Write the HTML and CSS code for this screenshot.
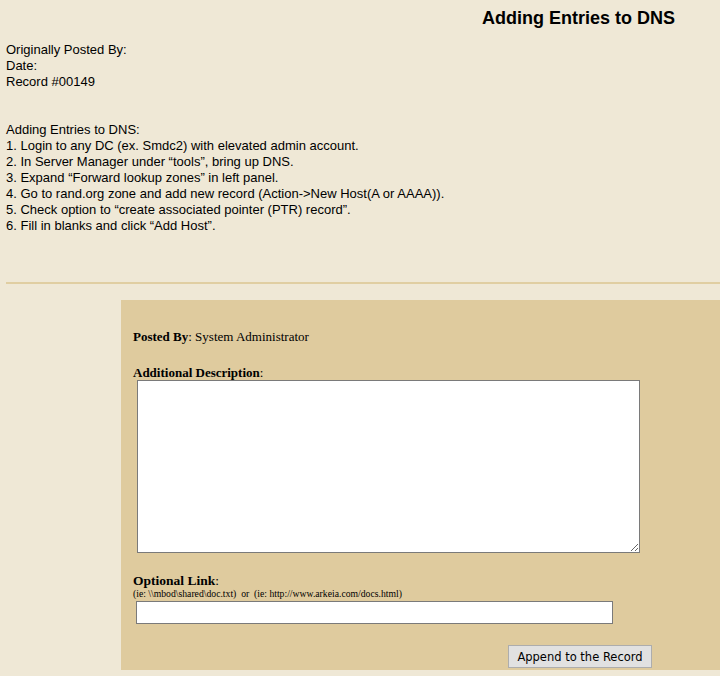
FILE: index.html
```html
<!DOCTYPE html>
<html lang="en">
<head>
    <meta charset="UTF-8">
    <title>Adding Entries to DNS</title>
    <link rel="stylesheet" href="styles.css">
</head>
<body>
    <div class="record">
        <h1 class="title">Adding Entries to DNS</h1>

        <div class="meta">
            Originally Posted By:<br>
            Date:<br>
            Record #00149
        </div>

        <div class="body-text">
            Adding Entries to DNS:<br>
            1. Login to any DC (ex. Smdc2) with elevated admin account.<br>
            2. In Server Manager under “tools”, bring up DNS.<br>
            3. Expand “Forward lookup zones” in left panel.<br>
            4. Go to rand.org zone and add new record (Action-&gt;New Host(A or AAAA)).<br>
            5. Check option to “create associated pointer (PTR) record”.<br>
            6. Fill in blanks and click “Add Host”.
        </div>
    </div>

    <hr class="divider">

    <form class="append">
        <p class="posted"><b>Posted By</b>: System Administrator</p>

        <label class="field-label" for="desc"><b>Additional Description</b>:</label>
        <textarea id="desc" class="desc"></textarea>

        <label class="field-label link-label" for="link"><b>Optional Link</b>:</label>
        <span class="hint">(ie: \\mbod\shared\doc.txt)&nbsp; or &nbsp;(ie: http://www.arkeia.com/docs.html)</span>
        <input id="link" class="link" type="text">

        <div class="actions">
            <button type="button" class="append-btn">Append to the Record</button>
        </div>
    </form>
</body>
</html>
```

FILE: styles.css
```css
* {
    box-sizing: border-box;
}

body {
    margin: 0;
    background: #efe8d6;
    color: #000;
    font-family: "Liberation Sans", Arial, sans-serif;
    font-size: 13px;
    line-height: 16px;
}

.record {
    padding: 0 0 0 6px;
}

.title {
    margin: 0;
    padding: 8px 45px 0 0;
    text-align: right;
    font-size: 18px;
    line-height: 21px;
    font-weight: bold;
}

.meta {
    margin-top: 13px;
}

.body-text {
    margin-top: 32px;
}

.divider {
    margin: 48px 0 0 6px;
    border: none;
    height: 2px;
    background: #e0cea2;
}

.append {
    display: flex;
    flex-direction: column;
    align-items: flex-start;
    margin: 16px 0 0 121px;
    padding: 29px 0 2px 12px;
    background: #dfcb9e;
    font-family: "Liberation Serif", "Times New Roman", serif;
    font-size: 13px;
    line-height: 15px;
}

.posted {
    margin: 0;
}

.field-label {
    margin-top: 21px;
    font-size: 13px;
}

.desc {
    width: 503px;
    height: 173px;
    margin: 0 0 0 4px;
    border: 1px solid #7a7a7a;
    background: #fff;
    resize: both;
}

.link-label {
    margin-top: 20px;
    font-size: 13.5px;
    line-height: 15px;
}

.hint {
    font-size: 9.7px;
    line-height: 12px;
}

.link {
    width: 477px;
    height: 23px;
    margin: 1px 0 0 3px;
    border: 1px solid #7a7a7a;
    background: #fff;
}

.actions {
    align-self: stretch;
    display: flex;
    padding: 21px 0 0 375px;
}

.append-btn {
    width: 144px;
    height: 23px;
    padding: 0;
    border: 1px solid #adadad;
    background: #e1e1e1;
    font-family: "DejaVu Sans", Tahoma, sans-serif;
    font-size: 11.5px;
    color: #000;
}
```
